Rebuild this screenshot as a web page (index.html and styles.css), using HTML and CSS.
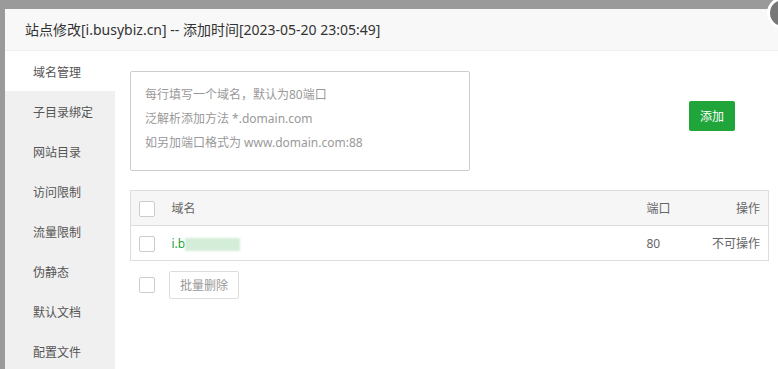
FILE: index.html
```html
<!DOCTYPE html>
<html lang="zh-CN">
<head>
  <meta charset="UTF-8">
  <title>站点修改</title>
  <link rel="stylesheet" href="styles.css">
</head>
<body>
  <div class="layer">
    <div class="layer-title">站点修改[i.busybiz.cn] -- 添加时间[2023-05-20 23:05:49]</div>
    <span class="layer-close"></span>

    <div class="layer-body">
      <!-- Side menu -->
      <ul class="side-menu">
        <li class="active">域名管理</li>
        <li>子目录绑定</li>
        <li>网站目录</li>
        <li>访问限制</li>
        <li>流量限制</li>
        <li>伪静态</li>
        <li>默认文档</li>
        <li>配置文件</li>
      </ul>

      <!-- Domain panel -->
      <div class="panel">
        <div class="add-row">
          <div class="domain-input">
            <p>每行填写一个域名，默认为80端口</p>
            <p>泛解析添加方法 *.domain.com</p>
            <p>如另加端口格式为 www.domain.com:88</p>
          </div>
          <button class="btn-green">添加</button>
        </div>

        <table class="domain-table">
          <thead>
            <tr>
              <th class="col-check"><span class="check"></span></th>
              <th>域名</th>
              <th class="col-port">端口</th>
              <th class="col-op">操作</th>
            </tr>
          </thead>
          <tbody>
            <tr>
              <td class="col-check"><span class="check"></span></td>
              <td><span class="link">i.b</span><span class="blur"></span></td>
              <td class="col-port">80</td>
              <td class="col-op">不可操作</td>
            </tr>
          </tbody>
        </table>

        <div class="batch">
          <span class="check"></span>
          <button class="btn-plain">批量删除</button>
        </div>
      </div>
    </div>
  </div>
</body>
</html>
```

FILE: styles.css
```css
html, body {
  margin: 0;
  height: 100%;
  overflow: hidden;
}
body {
  background: #9a9a9a;
  font-family: "Noto Sans", "Noto Sans CJK SC", sans-serif;
  font-size: 12px;
  color: #666;
}
ul, p {
  margin: 0;
  padding: 0;
}
.layer {
  position: relative;
  margin: 9px 0 0 5px;
  width: 790px;
  height: 400px;
  background: #fff;
}
.layer-title {
  height: 41px;
  line-height: 41px;
  padding-left: 20px;
  background: #f8f8f8;
  border-bottom: 1px solid #eee;
  font-size: 14px;
  color: #333;
}
.layer-close {
  position: absolute;
  top: -12px;
  left: 762px;
  width: 26px;
  height: 26px;
  border-radius: 50%;
  background: #777;
  border: 3px solid #fff;
}
.layer-body {
  display: flex;
}
.side-menu {
  list-style: none;
  width: 110px;
  background: #f0f0f0;
  height: 360px;
}
.side-menu li {
  height: 38px;
  line-height: 40px;
  padding: 2px 0 0 28px;
  color: #555;
}
.side-menu li.active {
  background: #fff;
}
.panel {
  padding: 20px 0 0 15px;
  width: 639px;
}
.add-row {
  display: flex;
  align-items: flex-start;
}
.domain-input {
  box-sizing: border-box;
  width: 340px;
  height: 100px;
  border: 1px solid #ccc;
  border-radius: 2px;
  padding: 11px 14px 0;
  color: #999;
  line-height: 24px;
}
.btn-green {
  margin: 30px 0 0 219px;
  width: 46px;
  height: 30px;
  border: 0;
  border-radius: 2px;
  background: #20a53a;
  color: #fff;
  font-family: inherit;
  font-size: 12px;
  padding: 0;
}
.domain-table {
  width: 639px;
  margin-top: 19px;
  border-collapse: collapse;
  border: 1px solid #ddd;
}
.domain-table th, .domain-table td {
  height: 35px;
  padding: 0;
  text-align: left;
  font-weight: normal;
  border-bottom: 1px solid #ddd;
  box-sizing: border-box;
}
.domain-table th {
  background: #f6f6f6;
  color: #666;
}
.domain-table .col-check {
  width: 41px;
  padding-left: 8px;
}
.domain-table .col-port {
  width: 54px;
}
.domain-table .col-op {
  width: 68px;
  padding-right: 8px;
  text-align: right;
}
.check {
  display: inline-block;
  box-sizing: border-box;
  width: 16px;
  height: 16px;
  border: 1px solid #ccc;
  border-radius: 2px;
  vertical-align: middle;
  background: #fff;
}
.link {
  color: #20a53a;
}
.blur {
  display: inline-block;
  width: 55px;
  height: 13px;
  background: #d3edd8;
  vertical-align: middle;
  filter: blur(1px);
}
.batch {
  display: flex;
  align-items: center;
  gap: 14px;
  padding: 10px 0 0 9px;
}
.btn-plain {
  height: 28px;
  width: 70px;
  padding: 0;
  border: 1px solid #ddd;
  border-radius: 2px;
  background: #fff;
  color: #999;
  font-family: inherit;
  font-size: 12px;
}
```
